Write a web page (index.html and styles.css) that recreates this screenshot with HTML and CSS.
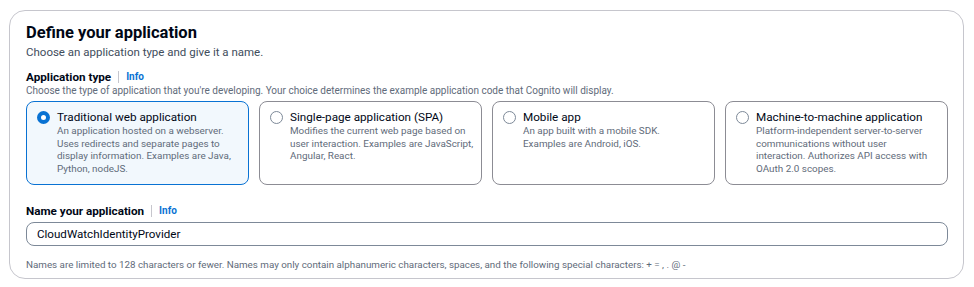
FILE: index.html
```html
<!DOCTYPE html>
<html lang="en">
<head>
  <meta charset="UTF-8">
  <title>Define your application</title>
  <link rel="stylesheet" href="styles.css">
</head>
<body>
  <div class="panel">
    <h2 class="title">Define your application</h2>
    <p class="subtitle">Choose an application type and give it a name.</p>

    <div class="field">
      <div class="label">Application type <span class="sep"></span> <a class="info">Info</a></div>
      <p class="desc">Choose the type of application that you're developing. Your choice determines the example application code that Cognito will display.</p>
      <div class="tiles">
        <div class="tile selected">
          <span class="radio"></span>
          <div>
            <div class="tile-title">Traditional web application</div>
            <div class="tile-desc">An application hosted on a webserver.<br>Uses redirects and separate pages to<br>display information. Examples are Java,<br>Python, nodeJS.</div>
          </div>
        </div>
        <div class="tile">
          <span class="radio"></span>
          <div>
            <div class="tile-title">Single-page application (SPA)</div>
            <div class="tile-desc">Modifies the current web page based on<br>user interaction. Examples are JavaScript,<br>Angular, React.</div>
          </div>
        </div>
        <div class="tile">
          <span class="radio"></span>
          <div>
            <div class="tile-title">Mobile app</div>
            <div class="tile-desc">An app built with a mobile SDK.<br>Examples are Android, iOS.</div>
          </div>
        </div>
        <div class="tile">
          <span class="radio"></span>
          <div>
            <div class="tile-title">Machine-to-machine application</div>
            <div class="tile-desc">Platform-independent server-to-server<br>communications without user<br>interaction. Authorizes API access with<br>OAuth 2.0 scopes.</div>
          </div>
        </div>
      </div>
    </div>

    <div class="field name-field">
      <div class="label">Name your application <span class="sep"></span> <a class="info">Info</a></div>
      <div class="input">CloudWatchIdentityProvider</div>
      <p class="hint">Names are limited to 128 characters or fewer. Names may only contain alphanumeric characters, spaces, and the following special characters: + = , . @ -</p>
    </div>
  </div>
</body>
</html>
```

FILE: styles.css
```css
*{
  margin: 0;
  padding: 0;
  box-sizing: border-box;
}
body{
  margin: 0;
  padding: 10px 9px;
  font-family: "Roboto", "Liberation Sans", sans-serif;
  color: #000716;
  background: #fff;
}
.panel{
  border: 1px solid #c6c6cd;
  border-radius: 16px;
  padding: 12px 15px 7px 16px;
  width: 955px;
}
.title{
  font-size: 16.5px;
  font-weight: 700;
  line-height: 20px;
}
.subtitle{
  font-size: 11.5px;
  line-height: 16px;
  color: #414d5c;
  margin-top: 1px;
}
.field{
  margin-top: 9px;
}
.label{
  font-size: 11.7px;
  font-weight: 700;
  line-height: 16px;
  display: flex;
  align-items: center;
}
.sep{
  display: inline-block;
  width: 1px;
  height: 12px;
  background: #c6c6cd;
  margin: 0 7px 0 7px;
}
.info{
  color: #0972d3;
  font-size: 10px;
  font-weight: 700;
}
.desc{
  font-size: 10px;
  line-height: 12px;
  color: #5f6b7a;
}
.tiles{
  display: grid;
  grid-template-columns: repeat(4, 1fr);
  gap: 10px;
  margin-top: 4px;
}
.tile{
  border: 1px solid #8c8c94;
  border-radius: 8px;
  height: 84px;
  padding: 7px 4px 0 10px;
  display: flex;
  gap: 7px;
}
.tile.selected{
  border-color: #0972d3;
  background: #f2f8fd;
}
.radio{
  flex: none;
  width: 13px;
  height: 13px;
  border: 1.5px solid #7d8998;
  border-radius: 50%;
  margin-top: 1.5px;
  background: #fff;
}
.selected .radio{
  border: 4px solid #0972d3;
}
.tile-title{
  font-size: 11.7px;
  line-height: 16px;
}
.tile-desc{
  font-size: 9.9px;
  line-height: 12.7px;
  color: #5f6b7a;
  white-space: nowrap;
}
.name-field{
  margin-top: 18px;
}
.input{
  margin-top: 3px;
  border: 1px solid #7d8998;
  border-radius: 8px;
  height: 24px;
  padding: 0 10px;
  font-size: 11.6px;
  line-height: 22px;
}
.hint{
  font-size: 9.8px;
  line-height: 12px;
  color: #5f6b7a;
  margin-top: 13px;
}
```
